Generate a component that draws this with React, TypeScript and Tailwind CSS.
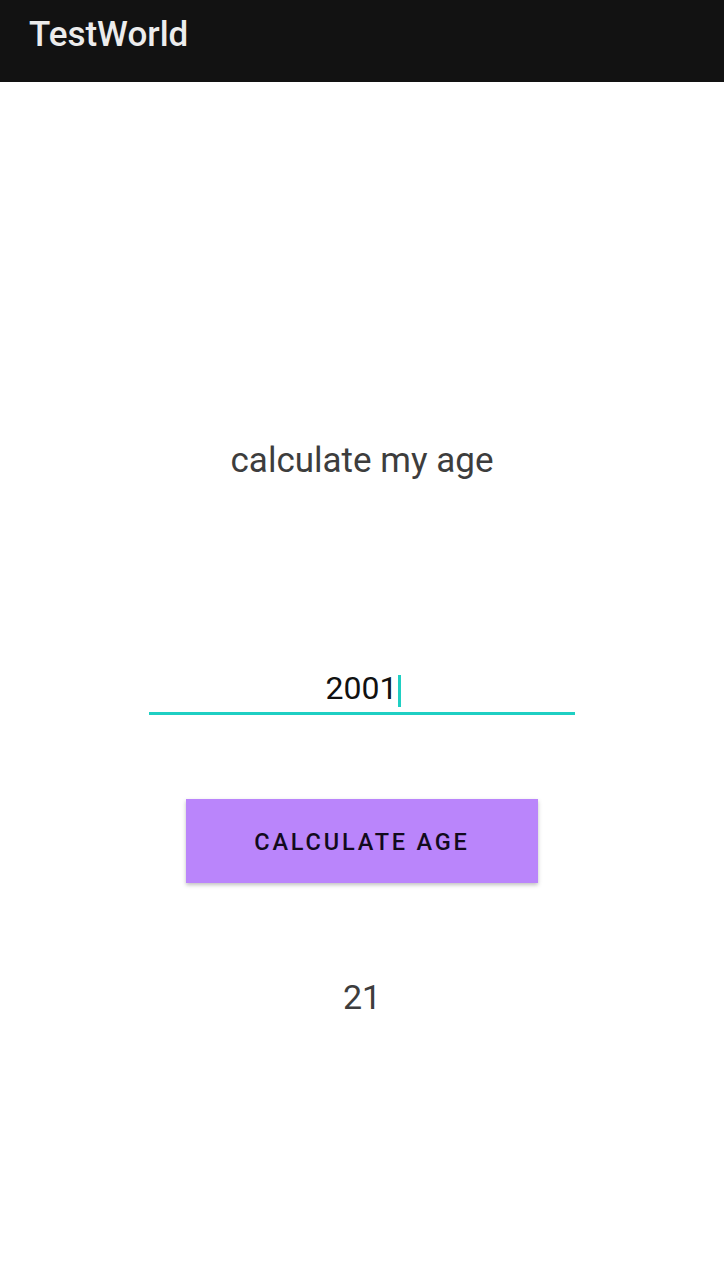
import React from "react";

const App = () => {
  return (
    <div className="w-[724px] h-[1280px] bg-white flex flex-col font-['Roboto',sans-serif]">
      <header className="h-[82px] bg-[#121212] flex items-start pt-[17px] px-[29px] shrink-0">
        <h1 className="text-[35px] font-medium text-[#ececec] leading-none">TestWorld</h1>
      </header>
      <main className="flex flex-col items-center">
        <p className="mt-[357px] text-[35px] leading-[44px] text-[#3d3d3d]">calculate my age</p>
        <div className="mt-[185px] w-[426px] flex flex-col items-center">
          <div className="flex items-center h-[40px] pl-[3px]">
            <span className="text-[32px] leading-[40px] text-[#111111]">2001</span>
            <span className="w-[3px] h-[32px] bg-[#1fcfc3] ml-[1px] mt-[6px]"></span>
          </div>
          <div className="w-full h-[3px] bg-[#1fcfc3] mt-[4px]"></div>
        </div>
        <button className="mt-[84px] w-[352px] h-[84px] pt-[4px] bg-[#ba85fb] shadow-[0_2px_4px_rgba(0,0,0,0.25)] text-[23.5px] font-medium tracking-[0.12em] text-[#120a1c]">
          CALCULATE AGE
        </button>
        <p className="mt-[94px] text-[34px] leading-[40px] text-[#3d3d3d]">21</p>
      </main>
    </div>
  );
};

export default App;
